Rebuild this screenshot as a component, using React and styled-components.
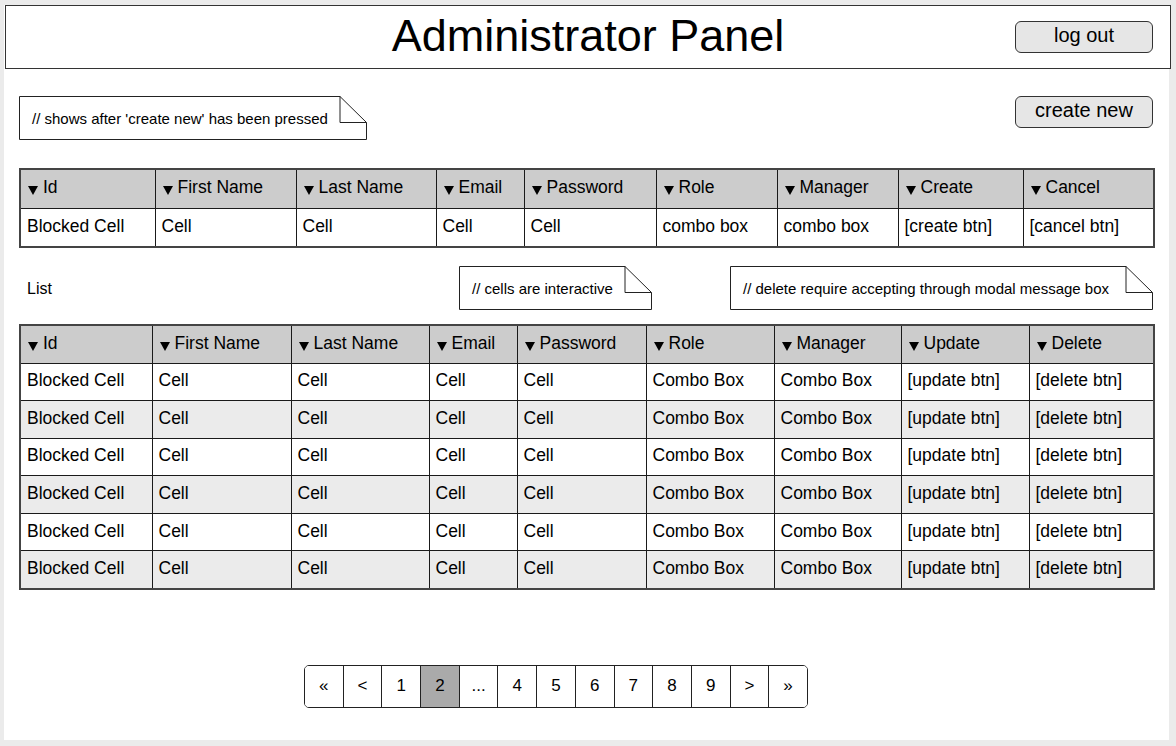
import React from 'react'
import styled, { createGlobalStyle } from 'styled-components'

const GlobalStyle = createGlobalStyle`
  body {
    margin: 0;
    background: #ebebeb;
    font-family: "Liberation Sans", Arial, sans-serif;
    color: #000;
  }
`

const Page = styled.div`
  width: 1165px;
  height: 735px;
  margin: 5px 0 0 4px;
  background: #fff;
  box-sizing: border-box;
`

const Header = styled.header`
  display: grid;
  grid-template-columns: 1fr auto 1fr;
  align-items: center;
  height: 64px;
  margin-left: 1px;
  width: 1166px;
  box-sizing: border-box;
  border: 1px solid #333;
  background: #fff;
`

const Title = styled.h1`
  grid-column: 2;
  margin: 0;
  font-size: 45px;
  font-weight: normal;
  line-height: 1;
  padding-bottom: 3px;
`

const Button = styled.button`
  justify-self: end;
  width: 138px;
  height: 32px;
  border: 1px solid #333;
  border-radius: 6px;
  background: #e6e6e6;
  font-family: "Liberation Sans", Arial, sans-serif;
  font-size: 20px;
  color: #000;
  padding: 0 0 3px;
  margin-right: ${p => p.$right || 0}px;
  align-self: ${p => p.$top ? 'flex-start' : 'center'};
`

const Content = styled.main`
  padding: 27px 16px 0 15px;
`

const TopRow = styled.div`
  display: flex;
  justify-content: space-between;
  align-items: flex-start;
`

const NoteBox = styled.div`
  position: relative;
  width: ${p => p.$w}px;
  height: 44px;
  box-sizing: border-box;
  padding-left: 13px;
  display: flex;
  align-items: center;
  font-size: 15px;
  svg {
    position: absolute;
    left: 0;
    top: 0;
  }
  span {
    position: relative;
  }
`

const Note = ({ w, children, style }) => (
  <NoteBox $w={w} style={style}>
    <svg width={w} height={44} viewBox={`0 0 ${w} 44`}>
      <path
        d={`M0.5 0.5 H${w - 27} L${w - 0.5} 26.5 V43.5 H0.5 Z M${w - 27} 0.5 V26.5 H${w - 0.5}`}
        fill="#fff"
        stroke="#222"
        strokeWidth="1"
      />
    </svg>
    <span>{children}</span>
  </NoteBox>
)

const Table = styled.table`
  width: 1134px;
  table-layout: fixed;
  border-collapse: collapse;
  border: 2px solid #444;
  margin-top: ${p => p.$mt}px;
  font-size: 17.5px;

  th, td {
    border: 1px solid #1a1a1a;
    text-align: left;
    font-weight: normal;
    padding: 0 0 2px 6px;
    white-space: nowrap;
    overflow: hidden;
  }
`

const HeadRow = styled.tr`
  height: ${p => p.$h}px;
  background: #cccccc;
`

const BodyRow = styled.tr`
  height: ${p => p.$h}px;
  background: ${p => p.$alt ? '#ebebeb' : '#fff'};
`

const Arrow = styled.span`
  display: inline-block;
  width: 0;
  height: 0;
  border-left: 5px solid transparent;
  border-right: 5px solid transparent;
  border-top: 9px solid #000;
  margin: 0 5px 0 1px;
  vertical-align: -2px;
`

const ListRow = styled.div`
  display: flex;
  align-items: center;
  margin-top: 18px;
`

const ListLabel = styled.div`
  flex: 1;
  padding-left: 8px;
  padding-top: 2px;
  font-size: 16px;
`

const Pager = styled.nav`
  display: flex;
  width: 504px;
  height: 43px;
  box-sizing: border-box;
  margin: 75px 0 0 285px;
  border: 1.5px solid #222;
  border-radius: 5px;
  overflow: hidden;
`

const PageCell = styled.div`
  flex: 1;
  display: flex;
  align-items: center;
  justify-content: center;
  font-size: 17px;
  background: ${p => p.$active ? '#aaaaaa' : '#fff'};
  border-left: ${p => p.$first ? 'none' : '1.5px solid #222'};
`

const createCols = [135, 141, 140, 88, 132, 121, 121, 125, 131]
const createHead = ['Id', 'First Name', 'Last Name', 'Email', 'Password', 'Role', 'Manager', 'Create', 'Cancel']
const createRow = ['Blocked Cell', 'Cell', 'Cell', 'Cell', 'Cell', 'combo box', 'combo box', '[create btn]', '[cancel btn]']

const listCols = [132, 139, 138, 88, 129, 128, 127, 128, 125]
const listHead = ['Id', 'First Name', 'Last Name', 'Email', 'Password', 'Role', 'Manager', 'Update', 'Delete']
const listRow = ['Blocked Cell', 'Cell', 'Cell', 'Cell', 'Cell', 'Combo Box', 'Combo Box', '[update btn]', '[delete btn]']

const pages = ['«', '<', '1', '2', '...', '4', '5', '6', '7', '8', '9', '>', '»']

const DataTable = ({ cols, head, rows, headH, rowH, mt, striped }) => (
  <Table $mt={mt}>
    <colgroup>
      {cols.map((w, i) => <col key={i} style={{ width: w }} />)}
    </colgroup>
    <thead>
      <HeadRow $h={headH}>
        {head.map(h => <th key={h}><Arrow />{h}</th>)}
      </HeadRow>
    </thead>
    <tbody>
      {rows.map((r, ri) => (
        <BodyRow key={ri} $h={rowH} $alt={striped && ri % 2 === 1}>
          {r.map((c, ci) => <td key={ci}>{c}</td>)}
        </BodyRow>
      ))}
    </tbody>
  </Table>
)

export default function App() {
  return (
    <>
      <GlobalStyle />
      <Page>
        <Header>
          <Title>Administrator Panel</Title>
          <Button $right={17}>log out</Button>
        </Header>
        <Content>
          <TopRow>
            <Note w={348}>// shows after 'create new' has been pressed</Note>
            <Button $top>create new</Button>
          </TopRow>
          <DataTable cols={createCols} head={createHead} rows={[createRow]} headH={39} rowH={39} mt={28} />
          <ListRow>
            <ListLabel>List</ListLabel>
            <Note w={193}>// cells are interactive</Note>
            <Note w={423} style={{ marginLeft: 78 }}>// delete require accepting through modal message box</Note>
          </ListRow>
          <DataTable
            cols={listCols}
            head={listHead}
            rows={[0, 1, 2, 3, 4, 5].map(() => listRow)}
            headH={38}
            rowH={37.6}
            mt={14}
            striped
          />
          <Pager>
            {pages.map((p, i) => (
              <PageCell key={i} $first={i === 0} $active={p === '2'}>{p}</PageCell>
            ))}
          </Pager>
        </Content>
      </Page>
    </>
  )
}
